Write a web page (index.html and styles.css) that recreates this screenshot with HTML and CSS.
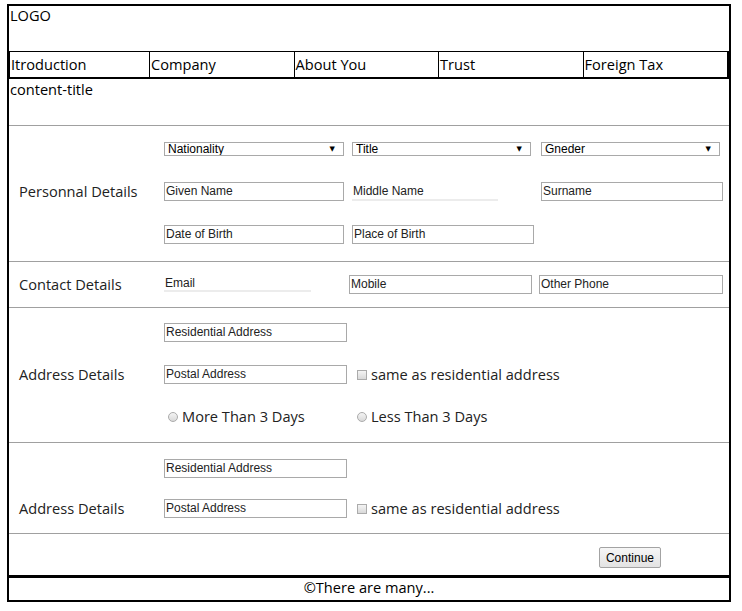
FILE: index.html
```html
<!DOCTYPE html>
<html lang="en">
<head>
  <meta charset="UTF-8">
  <meta name="viewport" content="width=device-width, initial-scale=1.0">
  <title>Application</title>
  <link rel="stylesheet" href="styles.css">
</head>
<body>
  <div class="page">
    <header class="top">LOGO</header>

    <nav class="tabs">
      <a>Itroduction</a>
      <a>Company</a>
      <a>About You</a>
      <a>Trust</a>
      <a>Foreign Tax</a>
    </nav>

    <div class="content-title">content-title</div>

    <!-- personal details -->
    <section class="block personal">
      <div class="row">
        <div class="label"></div>
        <div class="fields personal-cols">
          <div class="select w180"><select><option>Nationality</option></select></div>
          <div class="select w179"><select><option>Title</option></select></div>
          <div class="select w179"><select><option>Gneder</option></select></div>
        </div>
      </div>
      <div class="row">
        <div class="label">Personnal Details</div>
        <div class="fields personal-cols">
          <input class="box w180" placeholder="Given Name">
          <input class="line w146" placeholder="Middle Name">
          <input class="box w182" placeholder="Surname">
        </div>
      </div>
      <div class="row">
        <div class="label"></div>
        <div class="fields personal-cols">
          <input class="box w180" placeholder="Date of Birth">
          <input class="box w182" placeholder="Place of Birth">
        </div>
      </div>
    </section>

    <!-- contact details -->
    <section class="block contact">
      <div class="row">
        <div class="label">Contact Details</div>
        <div class="fields contact-cols">
          <input class="line w147 email" placeholder="Email">
          <input class="box w183" placeholder="Mobile">
          <input class="box w184" placeholder="Other Phone">
        </div>
      </div>
    </section>

    <!-- address details -->
    <section class="block address">
      <div class="row">
        <div class="label"></div>
        <div class="fields address-cols">
          <input class="box w183" placeholder="Residential Address">
        </div>
      </div>
      <div class="row">
        <div class="label">Address Details</div>
        <div class="fields address-cols">
          <input class="box w183" placeholder="Postal Address">
          <label class="check"><input type="checkbox">same as residential address</label>
        </div>
      </div>
      <div class="row">
        <div class="label"></div>
        <div class="fields address-cols">
          <label class="radio"><input type="radio" name="days">More Than 3 Days</label>
          <label class="radio"><input type="radio" name="days">Less Than 3 Days</label>
        </div>
      </div>
    </section>

    <section class="block address second">
      <div class="row">
        <div class="label"></div>
        <div class="fields address-cols">
          <input class="box w183" placeholder="Residential Address">
        </div>
      </div>
      <div class="row">
        <div class="label">Address Details</div>
        <div class="fields address-cols">
          <input class="box w183" placeholder="Postal Address">
          <label class="check"><input type="checkbox">same as residential address</label>
        </div>
      </div>
    </section>

    <div class="actions">
      <button>Continue</button>
    </div>

    <footer class="bottom">&copy;There are many...</footer>
  </div>
</body>
</html>
```

FILE: styles.css
```css
body {
  margin: 4px 0 0 7px;
  font-family: 'Open Sans', Arial, sans-serif;
  font-size: 14.6px;
  color: #000;
  background: #fff;
}

.page {
  width: 720px;
  border: 2px solid #000;
}

.top {
  height: 45px;
  padding-left: 1px;
  line-height: 19px;
}

.tabs {
  display: grid;
  grid-template-columns: 140px repeat(4, 1fr);
  border: 1px solid #000;
  border-bottom-width: 2px;
}

.tabs a {
  border-right: 1px solid #000;
  padding-left: 1px;
  line-height: 25px;
}

.content-title {
  height: 46px;
  padding-left: 1px;
  line-height: 20px;
  border-bottom: 1px solid #a0a0a0;
}

.block {
  display: flex;
  flex-direction: column;
  border-bottom: 1px solid #a0a0a0;
}

.personal {
  padding: 16px 0 17px;
  gap: 24px;
}

.personal .row:first-child {
  margin-bottom: 2px;
}

.contact {
  padding: 13px 0;
}

.address {
  padding: 15px 0 16px;
  gap: 23px;
}

.address.second {
  padding: 16px 0 15px;
  gap: 21px;
}

.row {
  display: grid;
  grid-template-columns: 155px 1fr;
  align-items: center;
}

.label {
  padding-left: 10px;
  line-height: 19px;
  color: #222;
}

.fields {
  display: grid;
  align-items: center;
}

.personal-cols {
  grid-template-columns: 188px 189px 1fr;
}

.contact-cols {
  grid-template-columns: 185px 190px 1fr;
}

.address-cols {
  grid-template-columns: 189px 1fr;
}

/* text inputs */
input.box,
input.line {
  box-sizing: border-box;
  height: 19px;
  margin: 0;
  font-family: 'Liberation Sans', Arial, sans-serif;
  font-size: 12px;
  color: #222;
  outline: none;
}

input.box {
  border: 1px solid #a9a9a9;
  padding: 0 1px 1px;
}

input.line {
  border: none;
  border-bottom: 2px solid #ececec;
  padding: 0 1px;
}

input.email {
  height: 17px;
  align-self: start;
}

input::placeholder {
  color: #222;
}

.w146 { width: 146px; }
.w147 { width: 147px; }
.w179 { width: 179px; }
.w180 { width: 180px; }
.w182 { width: 182px; }
.w183 { width: 183px; }
.w184 { width: 184px; }

/* selects */
.select {
  position: relative;
  height: 14px;
}

.select select {
  display: block;
  appearance: none;
  box-sizing: border-box;
  width: 100%;
  height: 14px;
  margin: 0;
  padding: 0 3px;
  border: 1px solid #a9a9a9;
  border-radius: 0;
  background: #fff;
  font-family: 'Liberation Sans', Arial, sans-serif;
  font-size: 12px;
  line-height: 12px;
  color: #000;
}

.select::after {
  content: '\25BC';
  position: absolute;
  right: 9px;
  top: 0;
  font-family: 'DejaVu Sans', sans-serif;
  font-size: 7px;
  line-height: 14px;
  pointer-events: none;
}

/* checkbox and radios */
.check,
.radio {
  display: flex;
  align-items: center;
  line-height: 19px;
  color: #222;
}

.check input,
.radio input {
  appearance: none;
  box-sizing: border-box;
  width: 10px;
  height: 10px;
  margin: 0 4px;
  border: 1px solid #ababab;
  background: linear-gradient(#f4f4f4, #d9d9d9);
}

.radio input {
  border-radius: 50%;
}

.actions {
  display: flex;
  justify-content: flex-end;
  padding: 13px 68px 7px 0;
}

.actions button {
  height: 21px;
  padding: 0 6px;
  border: 1px solid #a3a3a3;
  border-radius: 2px;
  background: linear-gradient(#f6f6f6, #e3e3e3);
  font-family: 'Liberation Sans', Arial, sans-serif;
  font-size: 12px;
  color: #000;
}

.bottom {
  border-top: 3px solid #000;
  height: 22px;
  line-height: 19px;
  text-align: center;
}
```
